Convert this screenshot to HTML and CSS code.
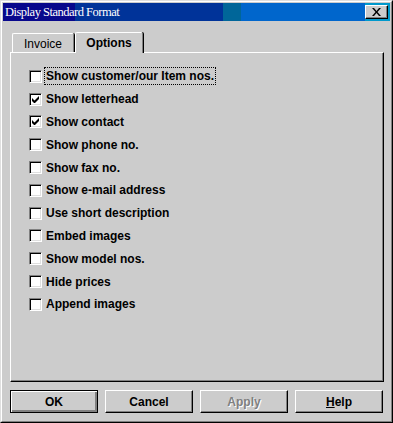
FILE: index.html
```html
<!DOCTYPE html>
<html>
<head>
<meta charset="utf-8">
<link rel="stylesheet" href="styles.css">
</head>
<body>
<div class="window">
  <div class="frame">
    <div class="titlebar">
      <span class="title">Display Standard Format</span>
      <button class="close" aria-label="Close">
        <svg width="9" height="8" viewBox="0 0 9 8"><path d="M0 0h2l2.5 3 2.5-3h2l-3.5 4 3.5 4h-2l-2.5-3-2.5 3h-2l3.5-4z" fill="#000"/></svg>
      </button>
    </div>
    <div class="tabs">
      <div class="tab">Invoice</div>
      <div class="tab active">Options</div>
    </div>
    <div class="panel">
      <ul class="list">
        <li class="item"><span class="box"></span><span class="label focus">Show customer/our Item nos.</span></li>
        <li class="item"><span class="box"><svg width="7" height="7" viewBox="0 0 7 7"><path d="M0 2v3l2 2h1l4-4V0L2.5 4.5z" fill="#000"/></svg></span><span class="label">Show letterhead</span></li>
        <li class="item"><span class="box"><svg width="7" height="7" viewBox="0 0 7 7"><path d="M0 2v3l2 2h1l4-4V0L2.5 4.5z" fill="#000"/></svg></span><span class="label">Show contact</span></li>
        <li class="item"><span class="box"></span><span class="label">Show phone no.</span></li>
        <li class="item"><span class="box"></span><span class="label">Show fax no.</span></li>
        <li class="item"><span class="box"></span><span class="label">Show e-mail address</span></li>
        <li class="item"><span class="box"></span><span class="label">Use short description</span></li>
        <li class="item"><span class="box"></span><span class="label">Embed images</span></li>
        <li class="item"><span class="box"></span><span class="label">Show model nos.</span></li>
        <li class="item"><span class="box"></span><span class="label">Hide prices</span></li>
        <li class="item"><span class="box"></span><span class="label">Append images</span></li>
      </ul>
    </div>
    <div class="buttons">
      <button class="btn default">OK</button>
      <button class="btn">Cancel</button>
      <button class="btn disabled">Apply</button>
      <button class="btn"><u>H</u>elp</button>
    </div>
  </div>
</div>
</body>
</html>
```

FILE: styles.css
```css
* { box-sizing: border-box; }
html, body { margin: 0; padding: 0; background: #cccccc; }
body { width: 393px; height: 423px; overflow: hidden; }

.window {
  width: 393px;
  height: 423px;
  border: 1px solid;
  border-color: #dfdfdf #000 #000 #dfdfdf;
  background: #cccccc;
}
.frame {
  height: 100%;
  border: 1px solid;
  border-color: #fff #808080 #808080 #fff;
  padding: 1px;
  display: flex;
  flex-direction: column;
}

.titlebar {
  height: 18px;
  display: flex;
  align-items: center;
  justify-content: space-between;
  padding: 0 2px 0 2px;
  background: linear-gradient(to right,
    #08088c 0, #08088c 72px,
    #003399 72px, #003399 220px,
    #006699 220px, #006699 238px,
    #0066cc 238px, #0066cc 362px,
    #0099cc 362px, #0099cc 100%);
}
.title {
  color: #fff;
  font-family: "Liberation Serif", "DejaVu Serif", serif;
  font-size: 12.5px;
  letter-spacing: -0.5px;
  white-space: nowrap;
}
.close {
  width: 23px;
  height: 14px;
  padding: 0;
  margin: 0;
  display: flex;
  align-items: center;
  justify-content: center;
  background: #cccccc;
  border: 1px solid;
  border-color: #fff #000 #000 #fff;
  box-shadow: inset -1px -1px 0 #808080;
}

.tabs {
  display: flex;
  align-items: flex-end;
  height: 31px;
  padding-left: 9px;
  font-family: "Liberation Sans", Arial, sans-serif;
  font-size: 12px;
  color: #000;
}
.tab {
  height: 19px;
  width: 62px;
  display: flex;
  align-items: center;
  justify-content: center;
  border-top: 1px solid #fff;
  border-left: 1px solid #fff;
  border-right: 1px solid #808080;
  border-radius: 2px 2px 0 0;
  box-shadow: 1px 0 0 #000;
  margin-right: 2px;
  padding-top: 1px;
}
.tab.active {
  height: 21px;
  width: 68px;
  margin-left: -1px;
  margin-bottom: -1px;
  position: relative;
  z-index: 1;
  background: #cccccc;
  font-weight: bold;
  padding-bottom: 1px;
}

.panel {
  margin-left: 7px;
  width: 374px;
  height: 330px;
  border: 1px solid;
  border-color: #fff #000 #000 #fff;
  box-shadow: inset -1px -1px 0 #808080;
  padding: 12px 0 0 18px;
}
.list {
  list-style: none;
  margin: 0;
  padding: 0;
  font-family: "Liberation Sans", Arial, sans-serif;
  font-size: 12px;
  font-weight: bold;
  color: #000;
}
.item {
  height: 22.8px;
  display: flex;
  align-items: center;
}
.box {
  width: 13px;
  height: 13px;
  flex: none;
  background: #fff;
  border: 1px solid;
  border-color: #808080 #fff #fff #808080;
  box-shadow: inset 1px 1px 0 #000, inset -1px -1px 0 #dfdfdf;
  display: flex;
  align-items: center;
  justify-content: center;
}
.box svg { display: block; }
.label {
  margin-left: 2px;
  padding: 1px;
  border: 1px dotted transparent;
  white-space: nowrap;
}
.label.focus { border-color: #000; }

.buttons {
  display: flex;
  gap: 7px;
  padding: 8px 0 0 7px;
}
.btn {
  width: 88px;
  height: 23px;
  margin: 0;
  padding: 0;
  background: #cccccc;
  border: 1px solid;
  border-color: #fff #000 #000 #fff;
  box-shadow: inset -1px -1px 0 #808080;
  font-family: "Liberation Sans", Arial, sans-serif;
  font-size: 12px;
  font-weight: bold;
  color: #000;
}
.btn.default {
  border: 1px solid #000;
  box-shadow: inset 1px 1px 0 #fff, inset -2px -2px 0 #808080, inset -1px -1px 0 #000;
}
.btn.disabled {
  color: #808080;
  text-shadow: 1px 1px 0 #fff;
}
```
